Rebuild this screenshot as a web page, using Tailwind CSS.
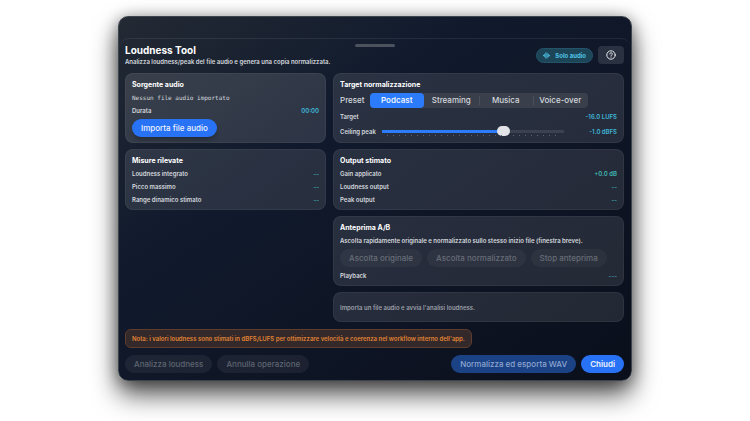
<!DOCTYPE html>
<html lang="it">
<head>
<meta charset="utf-8">
<meta name="viewport" content="width=device-width, initial-scale=1">
<title>Loudness Tool</title>
<script src="https://cdn.jsdelivr.net/npm/@tailwindcss/browser@4"></script>
</head>
<body class="min-h-screen overflow-hidden bg-white px-[118px] py-4 font-['Inter','Liberation_Sans',sans-serif] text-[6px] leading-[9px] font-semibold text-[#d5d8de]">
<main class="rounded-[10px] border border-[#3d444c] bg-linear-to-br from-[#232a34] via-[#111a2d] via-35% to-[#0a0f1b] pt-[21px] shadow-[0_14px_26px_rgba(0,0,0,0.65),0_2px_16px_rgba(0,0,0,0.4)]">
  <div class="relative rounded-[10px] border-t border-white/8 pt-[5px] pr-[7px] pb-[7px] pl-[6px]">
    <div class="absolute top-[5px] left-1/2 h-[3px] w-10 -translate-x-1/2 rounded-full bg-[#4c515e]"></div>

    <header class="flex items-start justify-between">
      <div>
        <h1 class="text-[10px] leading-[13px] font-bold text-white">Loudness Tool</h1>
        <p>Analizza loudness/peak del file audio e genera una copia normalizzata.</p>
      </div>
      <div class="flex items-center gap-[5px] pt-[2px]">
        <span class="flex h-[15px] items-center gap-[5px] rounded-full border border-[#25536a] bg-[#1d4558] px-[6px] font-bold text-[#4fc4e6]">
          <svg class="size-[7px]" viewBox="0 0 14 14" fill="none" stroke="currentColor" stroke-width="1.8" stroke-linecap="round" aria-hidden="true"><path d="M1 6.5v1M3.4 4.5v5M5.8 1.5v11M8.2 2.5v9M10.6 4.5v5M13 6.5v1"/></svg>
          Solo audio
        </span>
        <button type="button" aria-label="Aiuto" class="flex h-[18px] w-[26px] items-center justify-center rounded-[4px] bg-[#2a3140] text-[#e6e8ec]">
          <svg class="size-[10px]" viewBox="0 0 20 20" fill="none" stroke="currentColor" stroke-width="2" stroke-linecap="round" stroke-linejoin="round" aria-hidden="true"><circle cx="10" cy="10" r="8.4"/><path d="M7.6 8a2.5 2.5 0 1 1 3.6 2.2c-.8.4-1.2.8-1.2 1.6"/><path d="M10 14.3v.1"/></svg>
        </button>
      </div>
    </header>

    <div class="mt-[7px] grid grid-cols-[201fr_291fr] items-start gap-[7px]">
      <div class="flex flex-col gap-[6px]">
        <section class="flex flex-col gap-1 rounded-[8px] border border-white/5 bg-white/12 px-[6px] pt-[6px] pb-[5px]">
          <h2 class="text-[7px] font-bold text-white">Sorgente audio</h2>
          <p class="font-['DejaVu_Sans_Mono','Liberation_Mono',monospace] font-normal">Nessun file audio importato</p>
          <div class="flex justify-between"><span>Durata</span><span class="text-[#3fb6d8]">00:00</span></div>
          <button type="button" class="h-[18px] self-start rounded-full bg-[#2872f6] px-[9px] text-[8px] font-medium text-[#eef3ff] shadow-md shadow-black/20">Importa file audio</button>
        </section>
        <section class="flex flex-col gap-1 rounded-[8px] border border-white/5 bg-white/10 px-[6px] pt-[6px] pb-[5px]">
          <h2 class="text-[7px] font-bold text-white">Misure rilevate</h2>
          <div class="flex justify-between"><span>Loudness integrato</span><span class="text-[#3aa9ab]">--</span></div>
          <div class="flex justify-between"><span>Picco massimo</span><span class="text-[#3aa9ab]">--</span></div>
          <div class="flex justify-between"><span>Range dinamico stimato</span><span class="text-[#3aa9ab]">--</span></div>
        </section>
      </div>

      <div class="flex flex-col gap-[6px]">
        <section class="flex flex-col gap-1 rounded-[8px] border border-white/5 bg-white/10 px-[6px] pt-[6px] pb-[5px]">
          <h2 class="text-[7px] font-bold text-white">Target normalizzazione</h2>
          <div role="radiogroup" aria-labelledby="preset-label" class="flex items-center gap-[5px] text-[8px] font-medium">
            <span id="preset-label">Preset</span>
            <div class="relative grid h-[15px] w-[218px] grid-cols-4 rounded-[4px] bg-[#393f4b]">
              <label class="flex items-center justify-center rounded-[4px] has-checked:bg-[#2b7bfb] has-checked:font-semibold has-checked:text-[#eef3ff]"><input type="radio" name="preset" checked class="sr-only">Podcast</label>
              <label class="flex items-center justify-center rounded-[4px]"><input type="radio" name="preset" class="sr-only">Streaming</label>
              <label class="flex items-center justify-center bg-linear-to-b from-[#4a505c] to-[#4a505c] bg-[length:1px_9px] bg-left bg-no-repeat"><input type="radio" name="preset" class="sr-only">Musica</label>
              <label class="flex items-center justify-center bg-linear-to-b from-[#4a505c] to-[#4a505c] bg-[length:1px_9px] bg-left bg-no-repeat"><input type="radio" name="preset" class="sr-only">Voice-over</label>
            </div>
          </div>
          <div class="flex justify-between"><span>Target</span><span class="text-[#3fb6d8]">-16.0 LUFS</span></div>
          <div class="flex h-3 items-center">
            <label for="ceiling" class="w-[42px]">Ceiling peak</label>
            <div class="relative flex grow items-center">
              <input id="ceiling" type="range" min="0" max="100" value="68" class="block h-[10px] w-full appearance-none bg-linear-to-r from-[#2b7bfb] from-68% to-[#3b414e] to-68% bg-[length:100%_3px] bg-center bg-no-repeat [&::-webkit-slider-thumb]:h-[10px] [&::-webkit-slider-thumb]:w-[13px] [&::-webkit-slider-thumb]:appearance-none [&::-webkit-slider-thumb]:rounded-full [&::-webkit-slider-thumb]:bg-[#e2e3e6]">
              <div class="pointer-events-none absolute inset-x-[5px] top-[9px] h-px bg-[repeating-linear-gradient(90deg,#5b6270_0_1px,transparent_1px_6px)]"></div>
            </div>
            <span class="w-[53px] text-right text-[#3fb6d8]">-1.0 dBFS</span>
          </div>
        </section>

        <section class="flex flex-col gap-1 rounded-[8px] border border-white/5 bg-white/10 px-[6px] pt-[6px] pb-[5px]">
          <h2 class="text-[7px] font-bold text-white">Output stimato</h2>
          <div class="flex justify-between"><span>Gain applicato</span><span class="text-[#3fb9b5]">+0.0 dB</span></div>
          <div class="flex justify-between"><span>Loudness output</span><span class="text-[#3aa9ab]">--</span></div>
          <div class="flex justify-between"><span>Peak output</span><span class="text-[#3aa9ab]">--</span></div>
        </section>

        <section class="flex flex-col gap-1 rounded-[8px] border border-white/5 bg-white/10 px-[6px] pt-[6px] pb-[5px]">
          <h2 class="text-[7px] font-bold text-white">Anteprima A/B</h2>
          <p>Ascolta rapidamente originale e normalizzato sullo stesso inizio file (finestra breve).</p>
          <div class="flex gap-[5px] text-[8px] font-medium text-[#676d78]">
            <button type="button" disabled class="h-[18px] rounded-full bg-white/4 px-[9px]">Ascolta originale</button>
            <button type="button" disabled class="h-[18px] rounded-full bg-white/4 px-[9px]">Ascolta normalizzato</button>
            <button type="button" disabled class="h-[18px] rounded-full bg-white/4 px-[9px]">Stop anteprima</button>
          </div>
          <div class="flex justify-between"><span>Playback</span><span class="text-[#3f97ab]">---</span></div>
        </section>

        <section class="flex h-[30px] items-center rounded-[8px] border border-white/5 bg-white/10 px-[6px] text-[#9a9fa8]">
          <p>Importa un file audio e avvia l'analisi loudness.</p>
        </section>
      </div>
    </div>

    <p class="mt-[7px] flex h-[19px] w-fit items-center rounded-[6px] border border-[#5f3d2e] bg-[#33282a] px-[6px] text-[#e08433]">Nota: i valori loudness sono stimati in dBFS/LUFS per ottimizzare velocità e coerenza nel workflow interno dell'app.</p>

    <footer class="mt-[7px] flex items-center gap-[5px] text-[8px] font-medium">
      <button type="button" disabled class="h-[18px] rounded-full bg-white/6 px-[9px] text-[#5d6471]">Analizza loudness</button>
      <button type="button" disabled class="h-[18px] rounded-full bg-white/6 px-[9px] text-[#5d6471]">Annulla operazione</button>
      <button type="button" disabled class="ml-auto h-[18px] rounded-full bg-[#1b4285] px-[9px] text-[#8ea5cf]">Normalizza ed esporta WAV</button>
      <button type="button" class="h-[18px] rounded-full bg-[#2872f6] px-[9px] font-semibold text-[#eef3ff]">Chiudi</button>
    </footer>
  </div>
</main>
</body>
</html>
